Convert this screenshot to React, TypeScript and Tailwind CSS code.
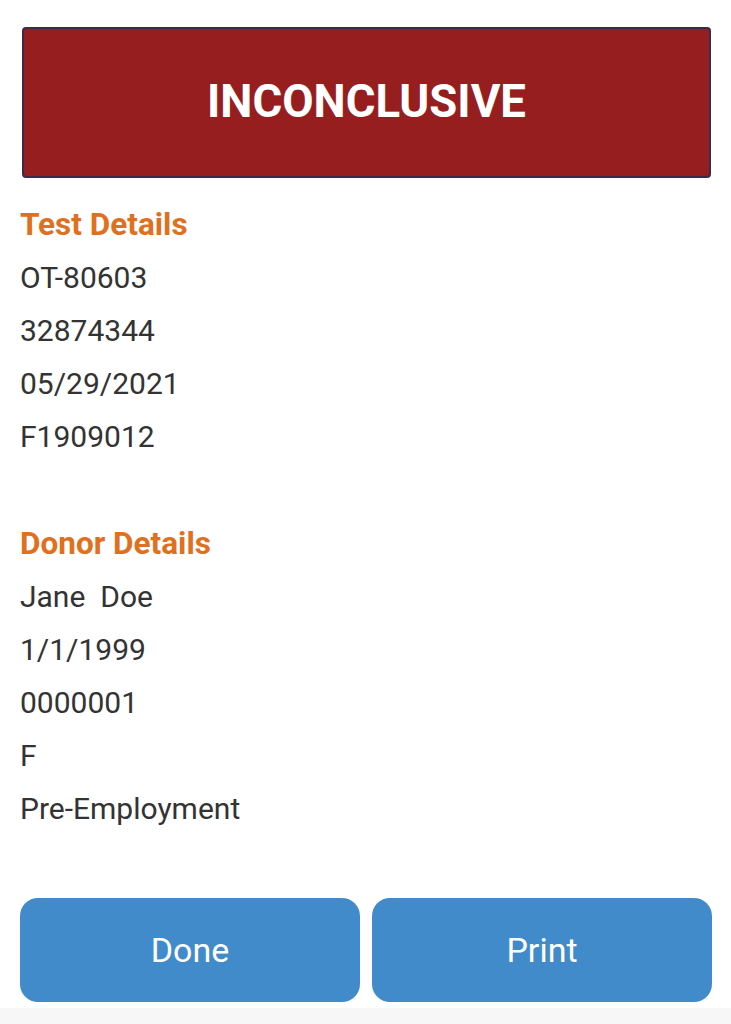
import React from 'react';

const testDetails = ['OT-80603', '32874344', '05/29/2021', 'F1909012'];
const donorDetails = ['Jane\u00a0 Doe', '1/1/1999', '0000001', 'F', 'Pre-Employment'];

const Row: React.FC<{ text: string }> = ({ text }) => (
  <div className="h-[53px] leading-[53px] text-[30px] text-[#333333] whitespace-pre">{text}</div>
);

const SectionTitle: React.FC<{ title: string }> = ({ title }) => (
  <h3 className="h-[52px] leading-[51px] text-[31.5px] font-bold text-[#e0701e]">{title}</h3>
);

const App: React.FC = () => {
  return (
    <div className="w-[731px] h-[1024px] bg-white flex flex-col font-['Roboto',sans-serif] overflow-hidden">
      {/* Result banner */}
      <div className="mt-[27px] ml-[22px] mr-[20px] h-[151px] rounded-[4px] border-2 border-[#3a2b4c] bg-[#971e1f] flex items-center justify-center">
        <span className="text-white text-[45.5px] font-bold">INCONCLUSIVE</span>
      </div>

      <div className="px-5 mt-[21px]">
        <SectionTitle title="Test Details" />
        {testDetails.map(item => (
          <Row key={item} text={item} />
        ))}
      </div>

      <div className="px-5 mt-[55px]">
        <SectionTitle title="Donor Details" />
        {donorDetails.map(item => (
          <Row key={item} text={item} />
        ))}
      </div>

      <div className="flex-1" />

      <div className="flex gap-3 pl-5 pr-[19px]">
        <button className="flex-1 h-[104px] rounded-[18px] bg-[#428bca] text-white text-[34px]">Done</button>
        <button className="flex-1 h-[104px] rounded-[18px] bg-[#428bca] text-white text-[34px]">Print</button>
      </div>
      <div className="h-[6px] bg-white" />
      <div className="h-[16px] bg-[#f7f7f7]" />
    </div>
  );
};

export default App;
